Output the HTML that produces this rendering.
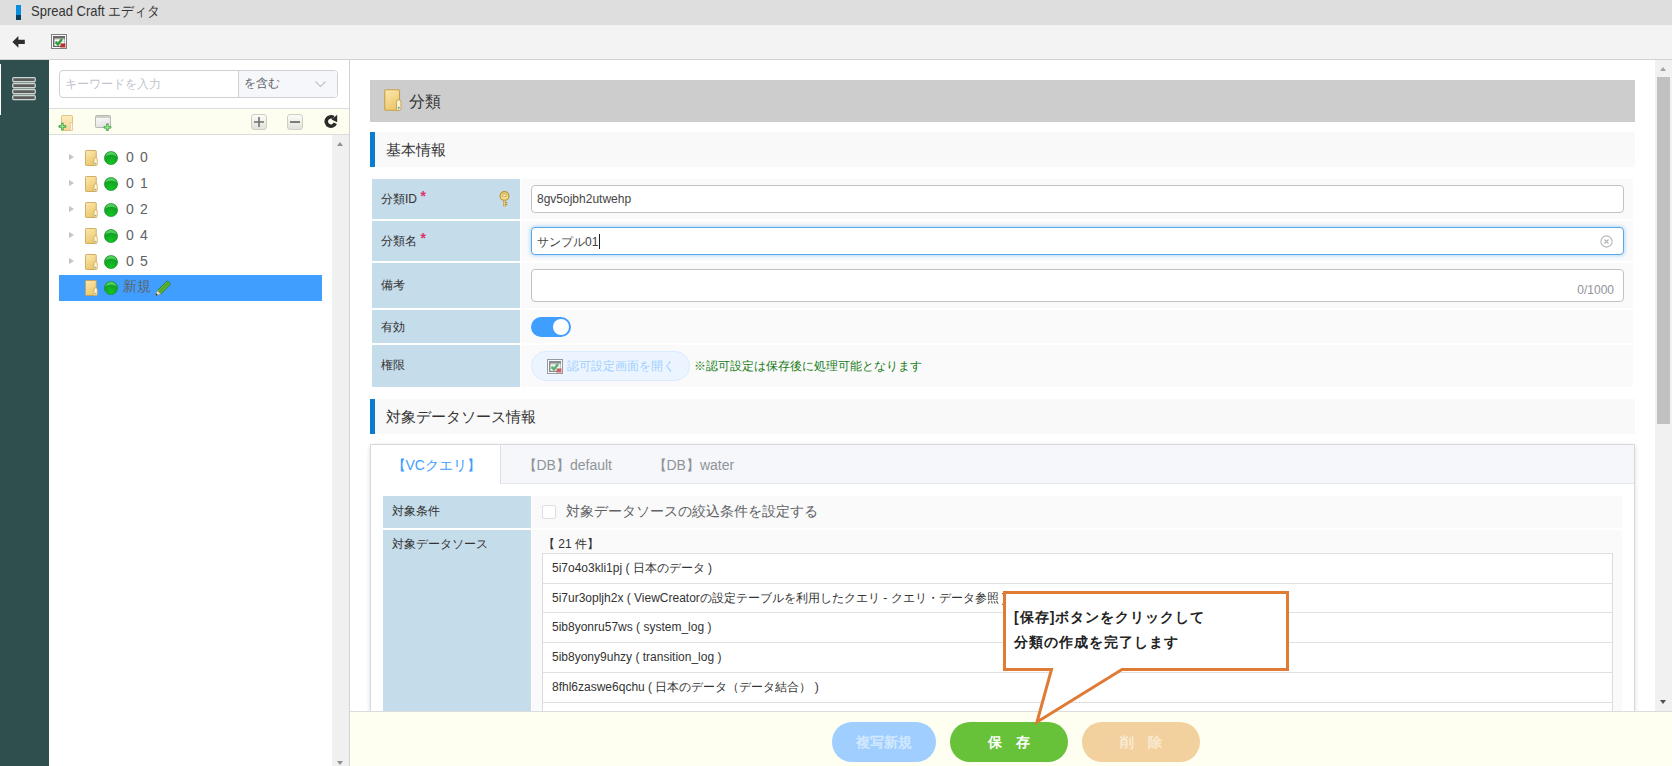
<!DOCTYPE html>
<html lang="ja">
<head>
<meta charset="utf-8">
<style>
*{box-sizing:border-box;margin:0;padding:0}
html,body{width:1672px;height:766px;overflow:hidden;background:#fff;font-family:"Liberation Sans",sans-serif;color:#333}
.a{position:absolute}
.t{position:absolute;white-space:nowrap}
svg{display:block}
#title{left:0;top:0;width:1672px;height:25px;background:#dedede}
#tb{left:0;top:25px;width:1672px;height:35px;background:#f3f3f3;border-bottom:1px solid #d2d2d2}
#side{left:0;top:60px;width:49px;height:706px;background:#2f4f4f}
#tree{left:49px;top:60px;width:301px;height:706px;background:#fff;border-right:1px solid #d3d3d3}
#main{left:350px;top:60px;width:1305px;height:651px;background:#fff;overflow:hidden}
#vsb{left:1655px;top:60px;width:17px;height:651px;background:#f1f1f1}
#foot{left:350px;top:711px;width:1322px;height:55px;background:#fefef1;border-top:1px solid #dcdcdc}
.row{position:absolute;left:0;width:300px;height:26px}
.tri{position:absolute;left:20px;top:9px;width:0;height:0;border-left:5px solid #c0c4cc;border-top:3.5px solid transparent;border-bottom:3.5px solid transparent}
.fold{position:absolute;left:36px;top:5px}
.ball{position:absolute;left:55px;top:6px}
.rt{position:absolute;left:77px;top:4px;font-size:14px;line-height:16px;color:#606266;white-space:nowrap;letter-spacing:6.2px}
.lab{position:absolute;background:#c5dcea;font-size:12px;color:#333}
.val{position:absolute;background:#fafafa}
.inp{position:absolute;background:#fff;border:1px solid #c2c2c2;border-radius:4px}
.req{color:#e2306c;font-size:14px;font-weight:bold;position:relative;top:-2px;margin-left:3.5px}
.li{position:absolute;left:0;width:1070px;height:30px;border-top:1px solid #e0e0e0;font-size:12px;line-height:28px;padding-left:9px;color:#333;white-space:nowrap}
.btn{position:absolute;top:10px;height:40px;border-radius:20px;color:#fff;font-size:14px;font-weight:bold;text-align:center;line-height:40px}
</style>
</head>
<body>
<svg width="0" height="0" style="position:absolute">
<defs>
<linearGradient id="fgr" x1="0" y1="0" x2="0.4" y2="1"><stop offset="0" stop-color="#fbe9b0"/><stop offset="1" stop-color="#edc86e"/></linearGradient>
<symbol id="folder" viewBox="0 0 26 32">
<rect x="1" y="1" width="21.5" height="30" rx="1.5" fill="url(#fgr)" stroke="#c69e4e" stroke-width="1.6"/>
<path d="M18 31 V19.5 Q18 15.5 21.3 15.5 Q24.6 15.5 24.6 19.5 V28.5 Q24.6 31 22 31 Z" fill="#faf0c8" stroke="#c69e4e" stroke-width="1.3"/>
<path d="M21.3 19 v6" stroke="#fffbe8" stroke-width="1.6"/>
<circle cx="21.3" cy="27.3" r="1.4" fill="#4a9fa8"/>
</symbol>
<symbol id="imgicon" viewBox="0 0 16 15">
<rect x="0.5" y="0.5" width="15" height="14" fill="#fbfbfb" stroke="#7d7d7d"/>
<rect x="2" y="2" width="12" height="11" fill="#6a6a6a"/>
<rect x="3.5" y="4.5" width="10" height="7.5" fill="#dcdcdc"/>
<path d="M3.5 6.5 h10 M3.5 8.5 h10 M3.5 10.5 h10" stroke="#fff" stroke-width="0.9"/>
<path d="M4.6 7.8 L7 10.3 L11 5" stroke="#2c9e3c" stroke-width="2.4" fill="none"/>
<path d="M9.5 9.5 h5 v4.5 h-5z" fill="#b83232"/>
<path d="M9 13.5 h6 M14.5 9 v5" stroke="#f0b0b0" stroke-width="0.8"/>
</symbol>
<radialGradient id="bgr" cx="0.5" cy="0.85" r="0.7"><stop offset="0" stop-color="#12c622"/><stop offset="1" stop-color="#139a26"/></radialGradient>
<symbol id="ball" viewBox="0 0 28 28">
<circle cx="14" cy="14" r="13.2" fill="url(#bgr)" stroke="#1b8b2a" stroke-width="1.2"/>
<path d="M2.5 11 Q6 2 14 1.5 Q22 2 25.5 11 Q20 7 14 7.5 Q7 7.5 2.5 11z" fill="#4fd05c"/>
</symbol>
</defs></svg>
<!-- title bar -->
<div id="title" class="a">
  <div class="a" style="left:16px;top:5px;width:5px;height:10px;background:#0a8fe0"></div>
  <div class="a" style="left:16px;top:15px;width:5px;height:5px;background:#0b3d5e"></div>
  <div class="t" style="left:31px;top:3px;font-size:13px;line-height:15px;color:#333;transform:scaleY(1.09);transform-origin:0 0">Spread Craft エディタ</div>
</div>
<!-- toolbar -->
<div id="tb" class="a">
  <svg class="a" style="left:12px;top:11px" width="14" height="13" viewBox="0 0 14 13"><path d="M0.4 6 L6.4 0 L6.4 3.8 L12.8 3.8 L12.8 7.9 L6.4 7.9 L6.4 11.8 Z" fill="#2e2e2e"/></svg>
  <svg class="a" style="left:51px;top:9px" width="16" height="15"><use href="#imgicon"/></svg>
</div>
<!-- sidebar -->
<div id="side" class="a">
  <div class="a" style="left:0;top:4px;width:1px;height:51px;background:#fff"></div>
  <svg class="a" style="left:12px;top:17px" width="24" height="24" viewBox="0 0 24 24">
    <rect x="1" y="1" width="22" height="22" fill="#71837f"/>
    <g fill="#5c5c5c" stroke="#ccd6d3" stroke-width="1.25">
      <rect x="0.7" y="0.7" width="22.6" height="3.9" rx="1"/>
      <rect x="0.7" y="6.7" width="22.6" height="3.9" rx="1"/>
      <rect x="0.7" y="12.7" width="22.6" height="3.9" rx="1"/>
      <rect x="0.7" y="18.7" width="22.6" height="3.9" rx="1"/>
    </g>
  </svg>
</div>
<!-- tree panel -->
<div id="tree" class="a">
  <div class="a" style="left:10px;top:10px;width:279px;height:28px;border:1px solid #cfd0d3;border-radius:4px;background:#fff;overflow:hidden">
    <div class="t" style="left:5px;top:6px;font-size:12px;line-height:14px;color:#c0c4cc">キーワードを入力</div>
    <div class="a" style="left:178px;top:0;width:100px;height:26px;background:#f5f7fa;border-left:1px solid #cfd0d3">
      <div class="t" style="left:5px;top:5px;font-size:12px;line-height:14px;color:#606266">を含む</div>
      <svg class="a" style="left:76px;top:10px" width="11" height="7" viewBox="0 0 11 7"><path d="M0.5 0.5 L5.5 5.5 L10.5 0.5" stroke="#c0c4cc" stroke-width="1.2" fill="none"/></svg>
    </div>
  </div>
  <div class="a" style="left:0;top:48px;width:300px;height:27px;background:#fefef0;border-top:1px solid #dcdcdc;border-bottom:1px solid #dcdcdc">
    <!-- folder add -->
    <svg class="a" style="left:9px;top:5px" width="16" height="18" viewBox="0 0 16 18">
      <defs><linearGradient id="fg0" x1="0" y1="0" x2="0" y2="1"><stop offset="0" stop-color="#fdecc0"/><stop offset="1" stop-color="#f3d58e"/></linearGradient></defs>
      <rect x="3.5" y="1.5" width="11" height="15" rx="0.8" fill="url(#fg0)" stroke="#e2c585"/>
      <path d="M12.5 8.5 q2 0 2 2 v6 h-2z" fill="#fffbe8" stroke="#d8c8a0" stroke-width="0.7"/>
      <path d="M4.4 9.8 v5.4 M1.7 12.5 h5.4" stroke="#5cae5c" stroke-width="2.8" stroke-linecap="round"/>
      <path d="M4.4 10.3 v4.4 M2.2 12.5 h4.4" stroke="#8ae88a" stroke-width="1.2"/>
    </svg>
    <!-- window add -->
    <svg class="a" style="left:46px;top:6px" width="17" height="16" viewBox="0 0 17 16">
      <defs><linearGradient id="wg0" x1="0" y1="0" x2="0.3" y2="1"><stop offset="0" stop-color="#ffffff"/><stop offset="1" stop-color="#e2e2e2"/></linearGradient></defs>
      <rect x="0.5" y="0.5" width="15" height="12" rx="0.8" fill="url(#wg0)" stroke="#b9b9b4"/>
      <rect x="1" y="1" width="14" height="2" fill="#cfcfca"/>
      <path d="M12.4 9.6 v5.4 M9.7 12.3 h5.4" stroke="#5cae5c" stroke-width="2.8" stroke-linecap="round"/>
      <path d="M12.4 10.1 v4.4 M10.2 12.3 h4.4" stroke="#8ae88a" stroke-width="1.2"/>
    </svg>
    <!-- plus -->
    <div class="a" style="left:202px;top:5px;width:16px;height:16px;border:1px solid #cfcfc6;border-radius:3px;background:linear-gradient(#fbfbf8,#e2e2dc)"></div>
    <svg class="a" style="left:204px;top:7px" width="12" height="12" viewBox="0 0 12 12"><path d="M6 1 v10 M1 6 h10" stroke="#707070" stroke-width="1.6"/></svg>
    <!-- minus -->
    <div class="a" style="left:238px;top:5px;width:16px;height:16px;border:1px solid #cfcfc6;border-radius:3px;background:linear-gradient(#fbfbf8,#e2e2dc)"></div>
    <svg class="a" style="left:240px;top:7px" width="12" height="12" viewBox="0 0 12 12"><path d="M1 6 h10" stroke="#707070" stroke-width="1.8"/></svg>
    <!-- refresh -->
    <svg class="a" style="left:275px;top:5px" width="14" height="15" viewBox="0 0 14 15">
      <path d="M11.3 9.3 A4.7 4.7 0 1 1 9.6 3.6" stroke="#2a2a2a" stroke-width="3.6" fill="none"/>
      <path d="M7.6 5.6 L13.2 0.8 L13.2 8.2 Z" fill="#2a2a2a"/>
    </svg>
  </div>
  <!-- rows -->
  <div class="a" style="left:0;top:85px;width:283px;height:240px">
    <div class="row" style="top:0px"><div class="tri"></div><svg class="fold" width="13" height="16"><use href="#folder"/></svg><svg class="ball" width="14" height="14"><use href="#ball"/></svg><div class="rt">00</div></div>
<div class="row" style="top:26px"><div class="tri"></div><svg class="fold" width="13" height="16"><use href="#folder"/></svg><svg class="ball" width="14" height="14"><use href="#ball"/></svg><div class="rt">01</div></div>
<div class="row" style="top:52px"><div class="tri"></div><svg class="fold" width="13" height="16"><use href="#folder"/></svg><svg class="ball" width="14" height="14"><use href="#ball"/></svg><div class="rt">02</div></div>
<div class="row" style="top:78px"><div class="tri"></div><svg class="fold" width="13" height="16"><use href="#folder"/></svg><svg class="ball" width="14" height="14"><use href="#ball"/></svg><div class="rt">04</div></div>
<div class="row" style="top:104px"><div class="tri"></div><svg class="fold" width="13" height="16"><use href="#folder"/></svg><svg class="ball" width="14" height="14"><use href="#ball"/></svg><div class="rt">05</div></div>
<div class="row" style="top:130px;left:10px;width:263px;background:#409eff"><svg class="fold" style="left:26px" width="13" height="16"><use href="#folder"/></svg><svg class="ball" style="left:45px" width="14" height="14"><use href="#ball"/></svg><div class="rt" style="left:64px;top:3px;letter-spacing:0">新規</div><svg class="a" style="left:96px;top:5px" width="16" height="16" viewBox="0 0 16 16"><path d="M2.4 10.6 L11.6 1.4 Q12.3 0.8 13 1.4 L15 3.4 Q15.6 4.1 15 4.8 L5.8 14 Z" fill="#5fb535" stroke="#2d7a18" stroke-width="0.8"/><path d="M4 12.3 L13.6 2.8" stroke="#3c9420" stroke-width="1"/><path d="M2.4 10.6 L5.8 14 L0.6 15.6 Z" fill="#efe3c0" stroke="#9a8a60" stroke-width="0.5"/><path d="M0.6 15.6 L1.3 13.4 L2.9 14.9 Z" fill="#222"/></svg></div>
  </div>
  <!-- tree scrollbar -->
  <div class="a" style="left:283px;top:75px;width:17px;height:631px;background:#f0f0f0">
    <div class="a" style="left:5px;top:7px;width:0;height:0;border-bottom:4px solid #909090;border-left:3.5px solid transparent;border-right:3.5px solid transparent"></div>
    <div class="a" style="left:5px;top:626px;width:0;height:0;border-top:4px solid #909090;border-left:3.5px solid transparent;border-right:3.5px solid transparent"></div>
  </div>
</div>
<!-- main -->
<div id="main" class="a">
  <!-- header -->
  <div class="a" style="left:20px;top:20px;width:1265px;height:42px;background:#cdcdcd">
    <svg class="a" style="left:14px;top:9px" width="18" height="22"><use href="#folder"/></svg>
    <div class="t" style="left:39px;top:13px;font-size:16px;line-height:18px;color:#333">分類</div>
  </div>
  <!-- section 1 -->
  <div class="a" style="left:20px;top:72px;width:1265px;height:35px;background:#f9f9f9;border-left:5px solid #0b7dcf">
    <div class="t" style="left:11px;top:9px;font-size:15px;line-height:17px;color:#333">基本情報</div>
  </div>
  <!-- rows -->
  <div class="lab" style="left:22px;top:119px;width:148px;height:40px"><div class="t" style="left:9px;top:12px;line-height:15px">分類ID<span class="req">*</span></div>
    <svg class="a" style="left:127px;top:12px" width="11" height="16" viewBox="0 0 11 16"><circle cx="5.5" cy="5" r="4.4" fill="#f5dc80" stroke="#b58f35" stroke-width="1.1"/><ellipse cx="5.5" cy="4.2" rx="2.3" ry="1.3" fill="#fff6d0" stroke="#b58f35" stroke-width="0.8"/><path d="M5.5 9.3 v6.2" stroke="#b58f35" stroke-width="2.2"/><path d="M5.5 9.3 v6" stroke="#f2d46a" stroke-width="0.9"/><path d="M6.5 11.6 h1.8 M6.5 13.6 h1.8" stroke="#b58f35" stroke-width="1.2"/></svg>
  </div>
  <div class="val" style="left:171px;top:119px;width:1112px;height:40px"></div>
  <div class="inp" style="left:181px;top:125px;width:1093px;height:28px"><div class="t" style="left:5px;top:6px;font-size:12px;line-height:14px;color:#444">8gv5ojbh2utwehp</div></div>

  <div class="lab" style="left:22px;top:161px;width:148px;height:40px"><div class="t" style="left:9px;top:12px;line-height:15px">分類名<span class="req">*</span></div></div>
  <div class="val" style="left:171px;top:161px;width:1112px;height:40px"></div>
  <div class="inp" style="left:181px;top:167px;width:1093px;height:28px;border-color:#5aa9e6;box-shadow:0 0 4px rgba(64,158,255,.55)"><div class="t" style="left:5px;top:6px;font-size:12px;line-height:14px;color:#444">サンプル01<span style="display:inline-block;width:1px;height:15px;background:#222;vertical-align:-3px;margin-left:1px"></span></div>
    <svg class="a" style="left:1068px;top:7px" width="13" height="13" viewBox="0 0 13 13"><circle cx="6.5" cy="6.5" r="5.6" fill="none" stroke="#b5b5b5" stroke-width="1.1"/><path d="M4.5 4.5 L8.5 8.5 M8.5 4.5 L4.5 8.5" stroke="#b5b5b5" stroke-width="1.1"/></svg>
  </div>

  <div class="lab" style="left:22px;top:203px;width:148px;height:45px"><div class="t" style="left:9px;top:15px;line-height:15px">備考</div></div>
  <div class="val" style="left:171px;top:203px;width:1112px;height:45px"></div>
  <div class="inp" style="left:181px;top:209px;width:1093px;height:33px"><div class="t" style="right:9px;top:12.5px;font-size:12px;line-height:14px;color:#909399">0/1000</div></div>

  <div class="lab" style="left:22px;top:250px;width:148px;height:33px"><div class="t" style="left:9px;top:10px;line-height:15px">有効</div></div>
  <div class="val" style="left:171px;top:250px;width:1112px;height:33px"></div>
  <div class="a" style="left:181px;top:257px;width:40px;height:20px;border-radius:10px;background:#409eff"><div class="a" style="left:22px;top:2px;width:16px;height:16px;border-radius:50%;background:#fff"></div></div>

  <div class="lab" style="left:22px;top:285px;width:148px;height:42px"><div class="t" style="left:9px;top:13px;line-height:15px">権限</div></div>
  <div class="val" style="left:171px;top:285px;width:1112px;height:42px"></div>
  <div class="a" style="left:181px;top:291px;width:159px;height:30px;border-radius:15px;background:#ecf5ff;border:1px solid #d9ecff">
    <svg class="a" style="left:15px;top:7px;opacity:.75" width="16" height="15"><use href="#imgicon"/></svg>
    <div class="t" style="left:35px;top:7px;font-size:12px;line-height:14px;color:#a0cfff">認可設定画面を開く</div>
  </div>
  <div class="t" style="left:344px;top:299px;font-size:12px;line-height:14px;color:#187c18">※認可設定は保存後に処理可能となります</div>

  <!-- section 2 -->
  <div class="a" style="left:20px;top:339px;width:1265px;height:35px;background:#f9f9f9;border-left:5px solid #0b7dcf">
    <div class="t" style="left:11px;top:9px;font-size:15px;line-height:17px;color:#333">対象データソース情報</div>
  </div>
  <!-- tabs -->
  <div class="a" style="left:20px;top:384px;width:1265px;height:400px;border:1px solid #d6d8dc;background:#fff;box-shadow:0 2px 4px rgba(0,0,0,.10),0 0 6px rgba(0,0,0,.04)">
    <div class="a" style="left:0;top:0;width:1263px;height:39px;background:#f5f7fa;border-bottom:1px solid #e4e7ed"></div>
    <div class="a" style="left:0;top:0;width:130px;height:39px;background:#fff;border-right:1px solid #dcdfe6"></div>
    <div class="t" style="left:20.5px;top:12px;font-size:14px;line-height:16px;color:#409eff">【VCクエリ】</div>
    <div class="t" style="left:151.5px;top:12px;font-size:14px;line-height:16px;color:#909399">【DB】default</div>
    <div class="t" style="left:281.5px;top:12px;font-size:14px;line-height:16px;color:#909399">【DB】water</div>

    <div class="lab" style="left:12px;top:51px;width:148px;height:32px"><div class="t" style="left:9px;top:8px;line-height:15px">対象条件</div></div>
    <div class="val" style="left:161px;top:51px;width:1090px;height:32px">
      <div class="a" style="left:10px;top:9px;width:14px;height:14px;border:1px solid #dcdfe6;border-radius:2px;background:#fff"></div>
      <div class="t" style="left:34px;top:7px;font-size:14px;line-height:16px;color:#606266">対象データソースの絞込条件を設定する</div>
    </div>
    <div class="lab" style="left:12px;top:85px;width:148px;height:320px"><div class="t" style="left:9px;top:7px;line-height:15px">対象データソース</div></div>
    <div class="val" style="left:161px;top:85px;width:1090px;height:320px">
      <div class="t" style="left:11px;top:7px;font-size:12px;line-height:14px;color:#333">【 21 件】</div>
      <div class="a" style="left:10px;top:23px;width:1071px;height:300px;background:#fff;border:1px solid #dcdcdc;border-top:none">
        <div class="li" style="top:0">5i7o4o3kli1pj ( 日本のデータ )</div>
        <div class="li" style="top:30px">5i7ur3opljh2x ( ViewCreatorの設定テーブルを利用したクエリ - クエリ・データ参照 )</div>
        <div class="li" style="top:59px">5ib8yonru57ws ( system_log )</div>
        <div class="li" style="top:89px">5ib8yony9uhzy ( transition_log )</div>
        <div class="li" style="top:119px">8fhl6zaswe6qchu ( 日本のデータ（データ結合） )</div>
        <div class="li" style="top:149px"></div>
      </div>
    </div>
  </div>
</div>
<div id="vsb" class="a">
  <div class="a" style="left:5px;top:7px;width:0;height:0;border-bottom:4px solid #a3a3a3;border-left:3.5px solid transparent;border-right:3.5px solid transparent"></div>
  <div class="a" style="left:2px;top:17px;width:13px;height:347px;background:#c1c1c1"></div>
  <div class="a" style="left:5px;top:640px;width:0;height:0;border-top:4px solid #505050;border-left:3.5px solid transparent;border-right:3.5px solid transparent"></div>
</div>
<div id="foot" class="a">
  <div class="btn" style="left:482px;width:104px;background:#a0cfff;color:rgba(255,255,255,.55)">複写新規</div>
  <div class="btn" style="left:600px;width:118px;background:#67c23a">保　存</div>
  <div class="btn" style="left:732px;width:118px;background:#f3d19e;color:rgba(255,255,255,.55)">削　除</div>
</div>
<svg class="a" style="left:1000px;top:588px" width="292" height="140" viewBox="1000 588 292 140">
  <path d="M1004.5 592.5 H1287.5 V669.5 H1122 L1037 722 L1051.5 669.5 H1004.5 Z" fill="#fff" stroke="#e07b35" stroke-width="3" stroke-linejoin="miter" stroke-miterlimit="10"/>
</svg>
<div class="t" style="left:1014px;top:609px;font-size:14px;line-height:16px;font-weight:bold;color:#222;letter-spacing:1px">[保存]ボタンをクリックして</div>
<div class="t" style="left:1014px;top:634px;font-size:14px;line-height:16px;font-weight:bold;color:#222;letter-spacing:1px">分類の作成を完了します</div>
</body>
</html>
